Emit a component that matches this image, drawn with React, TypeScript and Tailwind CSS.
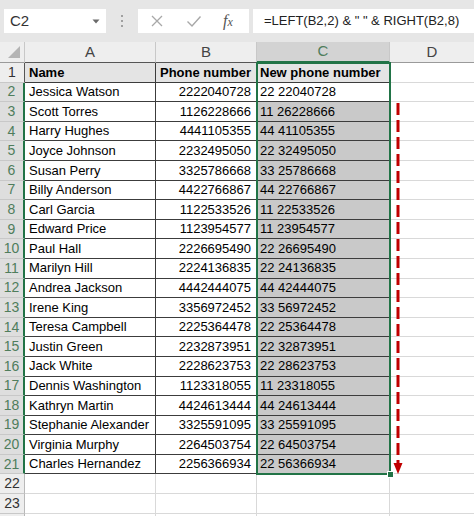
import React from "react";

const data: [string, string][] = [
  ["Jessica Watson", "2222040728"],
  ["Scott Torres", "1126228666"],
  ["Harry Hughes", "4441105355"],
  ["Joyce Johnson", "2232495050"],
  ["Susan Perry", "3325786668"],
  ["Billy Anderson", "4422766867"],
  ["Carl Garcia", "1122533526"],
  ["Edward Price", "1123954577"],
  ["Paul Hall", "2226695490"],
  ["Marilyn Hill", "2224136835"],
  ["Andrea Jackson", "4442444075"],
  ["Irene King", "3356972452"],
  ["Teresa Campbell", "2225364478"],
  ["Justin Green", "2232873951"],
  ["Jack White", "2228623753"],
  ["Dennis Washington", "1123318055"],
  ["Kathryn Martin", "4424613444"],
  ["Stephanie Alexander", "3325591095"],
  ["Virginia Murphy", "2264503754"],
  ["Charles Hernandez", "2256366934"],
];

const font = { fontFamily: '"Liberation Sans", Arial, sans-serif' };

function RowHeader({ n, sel }: { n: number; sel: boolean }) {
  return (
    <div
      className={
        "h-[19.6px] flex items-center justify-center text-[14px] border-b border-b-[#c8c8c8] " +
        (sel
          ? "bg-[#dedede] text-[#4f7d5c] border-r-2 border-r-[#217346]"
          : n === 1
          ? "bg-[#eeeeee] text-[#333333] border-r border-r-[#555555]"
          : "bg-[#eeeeee] text-[#333333] border-r border-r-[#b8b8b8]")
      }
    >
      {n}
    </div>
  );
}

export default function App() {
  const rows: React.ReactNode[] = [];

  rows.push(
    <React.Fragment key="r1">
      <RowHeader n={1} sel={false} />
      <div className="h-[19.6px] flex items-center pl-[4px] bg-[#e4e4e4] border-r border-b border-[#3c3c3c] font-bold text-[13px] text-black">
        Name
      </div>
      <div className="h-[19.6px] flex items-center justify-end pr-[5px] bg-[#e4e4e4] border-r border-b border-[#3c3c3c] font-bold text-[13px] text-black">
        Phone number
      </div>
      <div className="h-[19.6px] flex items-center pl-[3px] bg-[#e4e4e4] border-r border-b border-[#3c3c3c] font-bold text-[13px] text-black">
        New phone number
      </div>
      <div className="h-[19.6px] bg-white border-b border-[#d9d9d9]" />
    </React.Fragment>
  );

  data.forEach(([name, phone], i) => {
    const n = i + 2;
    const np = phone.slice(0, 2) + " " + phone.slice(2);
    rows.push(
      <React.Fragment key={"r" + n}>
        <RowHeader n={n} sel={true} />
        <div className="h-[19.6px] flex items-center pl-[4px] bg-white border-r border-b border-[#3c3c3c] text-[13px] text-black whitespace-nowrap">
          {name}
        </div>
        <div className="h-[19.6px] flex items-center justify-end pr-[5px] bg-white border-r border-b border-[#3c3c3c] text-[13px] text-black">
          {phone}
        </div>
        <div
          className={
            "h-[19.6px] flex items-center pl-[3px] border-r border-b border-[#3c3c3c] text-[13px] text-black " +
            (n === 2 ? "bg-white" : "bg-[#c9c9c9]")
          }
        >
          {np}
        </div>
        <div className="h-[19.6px] bg-white border-b border-[#d9d9d9]" />
      </React.Fragment>
    );
  });

  [22, 23].forEach((n) => {
    rows.push(
      <React.Fragment key={"r" + n}>
        <RowHeader n={n} sel={false} />
        <div className="h-[19.6px] bg-white border-r border-b border-[#d9d9d9]" />
        <div className="h-[19.6px] bg-white border-r border-b border-[#d9d9d9]" />
        <div className="h-[19.6px] bg-white border-r border-b border-[#d9d9d9]" />
        <div className="h-[19.6px] bg-white border-b border-[#d9d9d9]" />
      </React.Fragment>
    );
  });

  rows.push(
    <React.Fragment key="r24">
      <div className="h-[4px] bg-[#eeeeee] border-r border-r-[#b8b8b8]" />
      <div className="h-[4px] bg-white border-r border-[#d9d9d9]" />
      <div className="h-[4px] bg-white border-r border-[#d9d9d9]" />
      <div className="h-[4px] bg-white border-r border-[#d9d9d9]" />
      <div className="h-[4px] bg-white" />
    </React.Fragment>
  );

  return (
    <div className="w-[474px] h-[516px] overflow-hidden bg-white" style={font}>
      {/* Formula bar */}
      <div className="h-[42px] bg-[#e6e6e6] flex items-start pt-[9px] pl-[4px]">
        <div className="shrink-0 w-[102px] h-[24px] bg-white flex items-center pl-[6px] pr-[6px] justify-between">
          <span className="text-[15px] text-[#333333]">C2</span>
          <svg width="8" height="5" viewBox="0 0 8 5">
            <polygon points="0.5,0.5 7.5,0.5 4,4.5" fill="#6a6a6a" />
          </svg>
        </div>
        <div className="shrink-0 w-[32px] h-[24px] flex flex-col items-center justify-center gap-[3px]">
          <div className="w-[2px] h-[2px] bg-[#a0a0a0]" />
          <div className="w-[2px] h-[2px] bg-[#a0a0a0]" />
          <div className="w-[2px] h-[2px] bg-[#a0a0a0]" />
        </div>
        <div className="shrink-0 w-[111px] h-[24px] bg-white flex items-center">
          <svg width="14" height="14" viewBox="0 0 14 14" className="ml-[12px]">
            <path d="M2 2 L12 12 M12 2 L2 12" stroke="#a8a8a8" strokeWidth="1.3" fill="none" />
          </svg>
          <svg width="16" height="14" viewBox="0 0 16 14" className="ml-[22px]">
            <path d="M1.5 7.5 L6 12 L14.5 2.5" stroke="#a8a8a8" strokeWidth="1.4" fill="none" />
          </svg>
          <span
            className="ml-[21px] text-[16px] italic text-[#555555]"
            style={{ fontFamily: '"Liberation Serif", "DejaVu Serif", serif' }}
          >
            f<span className="text-[12px]">x</span>
          </span>
        </div>
        <div className="ml-[4px] min-w-0 flex-1 h-[24px] bg-white flex items-center pl-[11px] text-[13px] text-[#222222] whitespace-nowrap overflow-hidden">
          =LEFT(B2,2) &amp; &quot; &quot; &amp; RIGHT(B2,8)
        </div>
      </div>

      {/* Grid */}
      <div className="relative">
        <div className="grid grid-cols-[25px_131px_101px_133px_84px]">
          <div className="h-[21px] bg-[#eeeeee] border-r border-b border-r-[#c8c8c8] border-b-[#9a9a9a] relative">
            <svg width="14" height="14" viewBox="0 0 14 14" className="absolute right-[3px] bottom-[3px]">
              <polygon points="13,1 13,13 1,13" fill="#b4b4b4" />
            </svg>
          </div>
          <div className="h-[21px] bg-[#eeeeee] border-r border-b border-r-[#c8c8c8] border-b-[#555555] flex items-center justify-center text-[15px] text-[#444444]">
            A
          </div>
          <div className="h-[21px] bg-[#eeeeee] border-r border-b border-r-[#c8c8c8] border-b-[#555555] flex items-center justify-center text-[15px] text-[#444444]">
            B
          </div>
          <div className="h-[21px] bg-[#d3d3d3] border-r border-r-[#c8c8c8] border-b-2 border-b-[#217346] flex items-center justify-center text-[15px] text-[#4f7d5c]">
            C
          </div>
          <div className="h-[21px] bg-[#eeeeee] border-b border-b-[#9a9a9a] flex items-center justify-center text-[15px] text-[#444444]">
            D
          </div>
          {rows}
        </div>

        <div className="absolute left-[256px] top-[20px] w-[135px] h-[413px] border-2 border-[#217346] pointer-events-none" />
        <div className="absolute left-[387px] top-[429px] w-[7px] h-[7px] bg-[#217346] border border-white" />

        <svg
          className="absolute left-[392px] top-[60px]"
          width="12"
          height="374"
          viewBox="0 0 12 374"
        >
          <line x1="6" y1="1" x2="6" y2="362" stroke="#c00000" strokeWidth="3" strokeDasharray="12 5" />
          <polygon points="1.5,361 10.5,361 6,372" fill="#c00000" />
        </svg>
      </div>
    </div>
  );
}
